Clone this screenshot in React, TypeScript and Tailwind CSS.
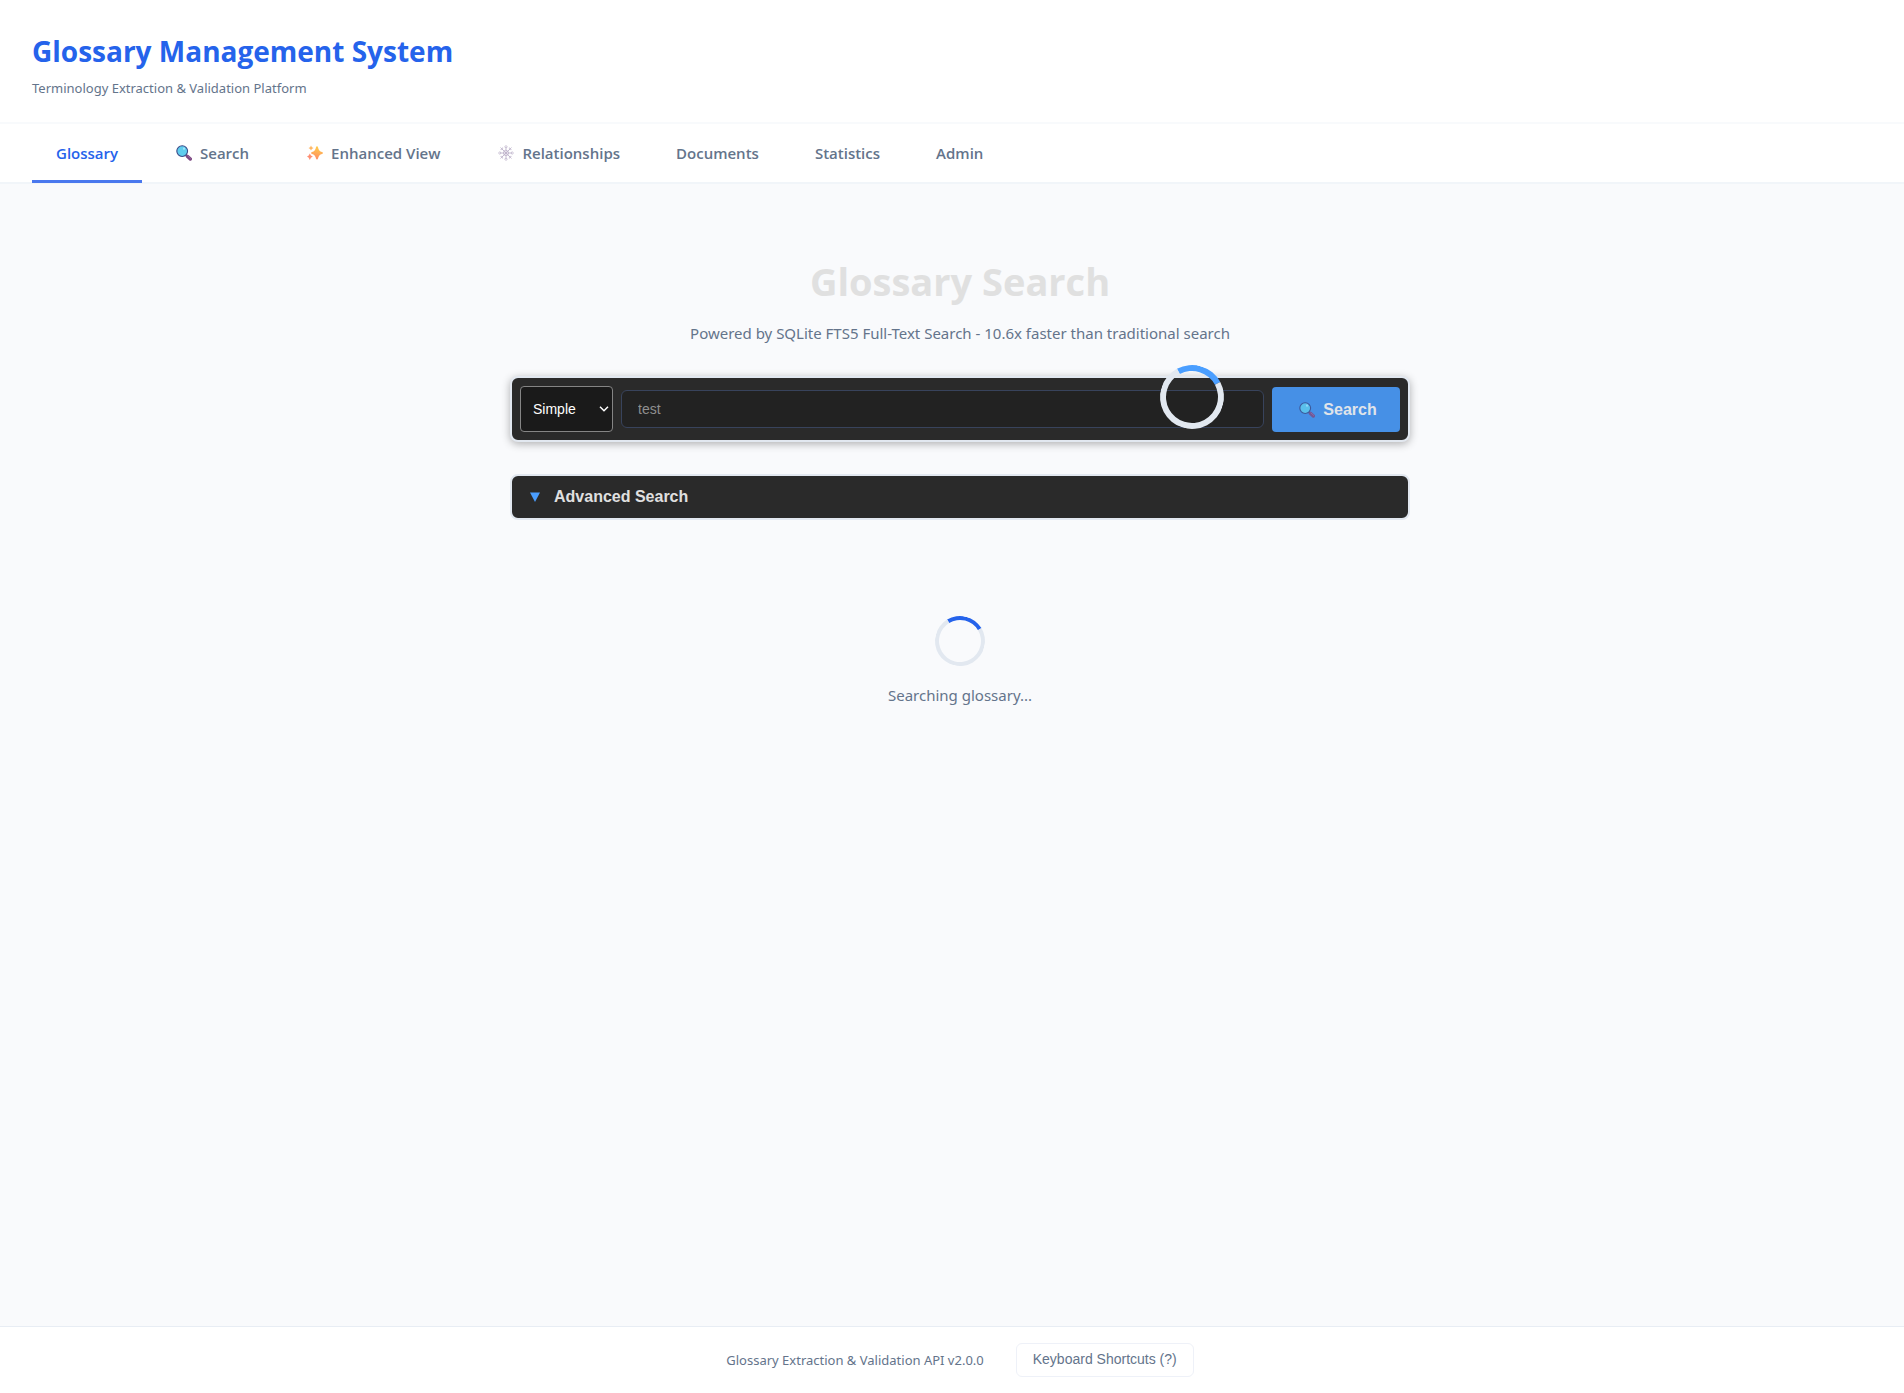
import React, { useState } from "react";

type IconProps = { className?: string };

function MagnifierIcon({ className = "" }: IconProps) {
  return (
    <svg viewBox="0 0 16 16" className={`ml-0.5 h-4 w-4 shrink-0 ${className}`} aria-hidden="true">
      <path d="M9.6 9.6 L11.4 11.2" stroke="#3f3a6b" strokeWidth="1.4" />
      <path d="M11.3 11.2 L14.3 14" stroke="#7d4a83" strokeWidth="3.4" strokeLinecap="round" />
      <path d="M12 11 L14.8 13.5" stroke="#97649b" strokeWidth="1" strokeLinecap="round" />
      <circle cx="6.2" cy="6.1" r="5.4" fill="#5fcdee" stroke="#3b4a88" strokeWidth="1.1" />
      <circle cx="8" cy="3.7" r="1.1" fill="#a5e8fa" />
    </svg>
  );
}

function SparklesIcon({ className = "" }: IconProps) {
  return (
    <svg viewBox="0 0 16 16" className={`ml-0.5 h-4 w-4 shrink-0 ${className}`} aria-hidden="true">
      <defs>
        <linearGradient id="spark" x1="0.6" y1="0" x2="0.4" y2="1">
          <stop offset="0" stopColor="#ffcf4a" />
          <stop offset="1" stopColor="#ff8a66" />
        </linearGradient>
      </defs>
      <path d="M10 1.2 Q10.8 1.2 11 2.2 Q11.7 6.1 15 7 Q16 7.3 16 8 Q16 8.7 15 9 Q11.7 9.9 11 13.6 Q10.8 14.6 10 14.6 Q9.200 14.600 9 13.600 Q8.300 9.900 5 9 Q4 8.700 4 8 Q4 7.300 5 7 Q8.300 6.100 9 2.200 Q9.200 1.200 10 1.200Z" fill="url(#spark)" />
      <path d="M4 .4 Q4.500 2.600 6.600 3 Q4.500 3.500 4 5.600 Q3.500 3.500 1.500 3 Q3.500 2.600 4 .4Z" fill="#ffb765" />
      <path d="M2.800 8.600 Q3.500 11 5.800 11.600 Q3.500 12.300 2.800 15 Q2.100 12.300 0 11.600 Q2.100 11 2.800 8.600Z" fill="#ff8f73" />
    </svg>
  );
}

function WebIcon({ className = "" }: IconProps) {
  return (
    <svg viewBox="0 0 16 16" className={`ml-0.5 h-4 w-4 shrink-0 ${className}`} fill="none" stroke="#bfb4cc" strokeLinecap="round" aria-hidden="true">
      <path d="M8 .5V15.500M.5 8H15.500M2.800 2.800L13.200 13.200M13.200 2.800L2.800 13.200" strokeWidth="0.9" />
      <path d="M8 5.300L9.900 6.100L10.700 8L9.900 9.900L8 10.700L6.100 9.900L5.300 8L6.100 6.100Z" strokeWidth="0.8" />
      <path d="M6.500 1.800L8 3L9.500 1.800M6.500 14.200L8 13L9.500 14.200M1.800 6.500L3 8L1.800 9.500M14.200 6.500L13 8L14.200 9.500M2.800 4.600H4.600V2.800M13.200 4.600H11.400V2.800M2.800 11.400H4.600V13.200M13.200 11.400H11.400V13.200" strokeWidth="0.7" />
    </svg>
  );
}

const tabs: { label: string; Icon?: React.ComponentType<IconProps> }[] = [
  { label: "Glossary" },
  { label: "Search", Icon: MagnifierIcon },
  { label: "Enhanced View", Icon: SparklesIcon },
  { label: "Relationships", Icon: WebIcon },
  { label: "Documents" },
  { label: "Statistics" },
  { label: "Admin" },
];

export default function App() {
  const [active, setActive] = useState("Glossary");
  const [query, setQuery] = useState("test");

  return (
    <div className="flex min-h-screen flex-col bg-[#f9fafc] font-['Noto_Sans','Open_Sans',sans-serif] text-[#64748b]">
      <header className="border-b-2 border-[#f8fafc] bg-white px-8 pt-8 pb-[23px]">
        <h1 className="font-['Open_Sans','Noto_Sans',sans-serif] text-[28px] leading-[38px] font-bold text-[#2563eb]">
          Glossary Management System
        </h1>
        <p className="mt-[7px] text-[13px] leading-[22px]">Terminology Extraction &amp; Validation Platform</p>
      </header>

      <nav className="flex gap-2 border-b-2 border-[#f1f5f9] bg-white px-8" aria-label="Main">
        {tabs.map(({ label, Icon }) => (
          <button
            key={label}
            type="button"
            onClick={() => setActive(label)}
            className={`-mb-px flex h-[59px] items-center gap-2 border-b-3 px-6 pt-0.5 font-['Open_Sans','Noto_Sans',sans-serif] text-[15px] font-semibold ${
              active === label ? "border-[#4a78ee] text-[#2563eb]" : "border-transparent text-[#64748b]"
            }`}
          >
            {Icon && <Icon />}
            {label}
          </button>
        ))}
      </nav>

      <main className="flex flex-1 flex-col items-center pt-[67px] pl-4">
        <h2 className="font-['Open_Sans','Noto_Sans',sans-serif] text-[38px] leading-[60px] font-bold text-[#e0e0e0]">
          Glossary Search
        </h2>
        <p className="mt-2 text-[15px] leading-7">
          Powered by SQLite FTS5 Full-Text Search - 10.6x faster than traditional search
        </p>

        <form
          onSubmit={(e) => e.preventDefault()}
          className="mt-[29px] flex w-full max-w-[900px] items-center gap-2 rounded-lg border-2 border-[#e2e8f0] bg-[#2a2a2a] p-2 font-['Liberation_Sans',Arial,sans-serif] shadow-[0_2px_8px_rgba(0,0,0,0.3)]"
        >
          <div className="relative flex w-[93px] shrink-0 items-center">
            <select
              aria-label="Search mode"
              className="h-[46px] w-full appearance-none rounded border border-[#858585] bg-[#1a1a1a] pl-3 text-sm text-white"
            >
              <option>Simple</option>
              <option>Advanced</option>
            </select>
            <svg viewBox="0 0 10 6" className="pointer-events-none absolute right-1 h-1.5 w-2.5" fill="none" stroke="#ffffff" strokeWidth="1.5" aria-hidden="true">
              <path d="M1 .8L5 4.800L9 .8" />
            </svg>
          </div>
          <div className="relative flex flex-1">
            <input
              type="text"
              aria-label="Search term"
              value={query}
              onChange={(e) => setQuery(e.target.value)}
              className="h-[38px] w-full rounded-md border border-[#38435c] bg-[#222222] px-4 text-sm text-[#8f8f8f] outline-none"
            />
            <span className="absolute -top-[25px] right-10 h-16 w-16 rotate-[17deg] rounded-full border-6 border-[#e2e8f0] border-t-[#4a9eff]" />
          </div>
          <button
            type="submit"
            className="flex h-[45px] w-32 shrink-0 items-center justify-center gap-2 rounded bg-[#4690e6] pt-0.5 pl-0.5 text-base font-bold text-[#e0e4ea]"
          >
            <MagnifierIcon className="opacity-80" />
            Search
          </button>
        </form>

        <button
          type="button"
          className="mt-8 flex h-[46px] w-full max-w-[900px] items-center gap-3 rounded-lg border-2 border-[#e2e8f0] bg-[#2a2a2a] px-4 font-['Liberation_Sans',Arial,sans-serif] text-base font-bold text-[#e0e0e0]"
        >
          <svg viewBox="0 0 10 10" className="mx-0.5 h-2.5 w-2.5" fill="#4a9eff" aria-hidden="true">
            <path d="M0 .5H10L5 10Z" />
          </svg>
          Advanced Search
        </button>

        <div role="status" className="flex flex-col items-center pt-24">
          <span className="h-[50px] w-[50px] rotate-[14deg] rounded-full border-4 border-[#e2e8f0] border-t-[#2563eb]" />
          <p className="mt-[15px] text-[15px] leading-7">Searching glossary...</p>
        </div>
      </main>

      <footer className="flex items-center justify-center gap-8 border-t border-[#e8edf4] bg-white py-4 pl-4">
        <span className="text-[13px] leading-5">Glossary Extraction &amp; Validation API v2.0.0</span>
        <button
          type="button"
          className="h-[34px] rounded-md border border-[#eef1f8] px-4 pb-0.5 font-['Liberation_Sans',Arial,sans-serif] text-sm text-[#64748b]"
        >
          Keyboard Shortcuts (?)
        </button>
      </footer>
    </div>
  );
}
